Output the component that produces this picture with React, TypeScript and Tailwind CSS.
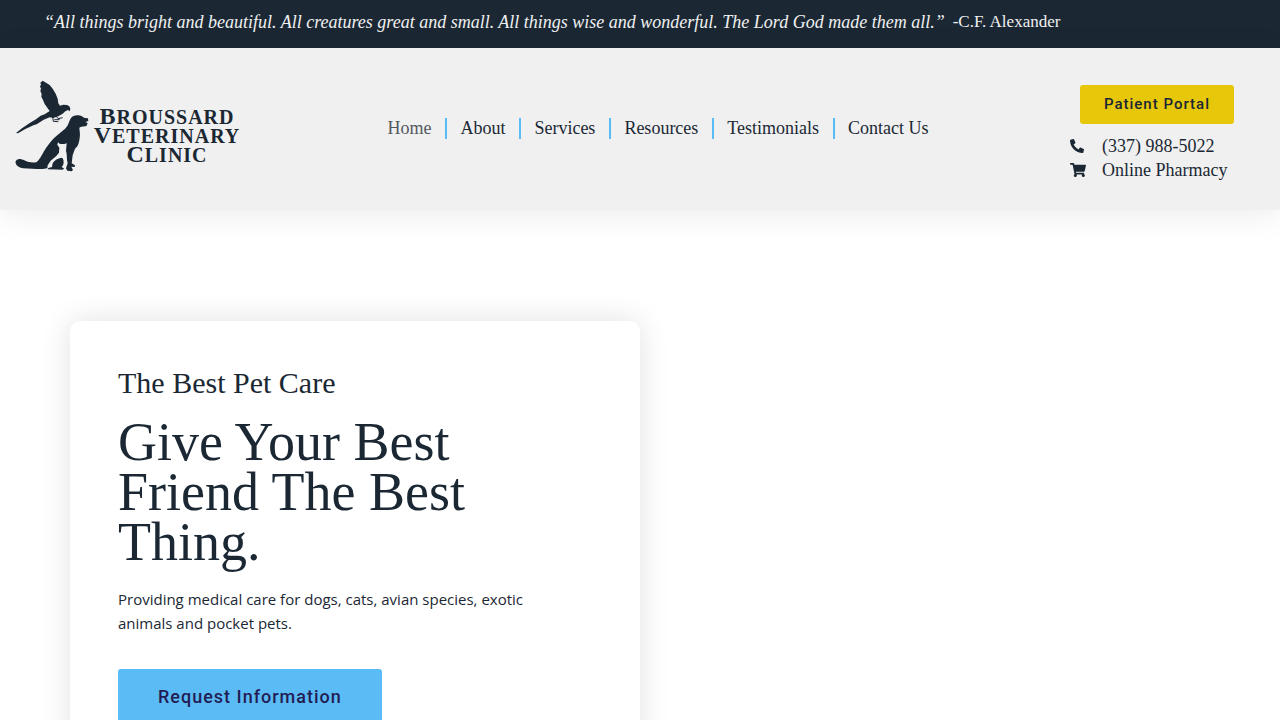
import { FaPhoneAlt, FaShoppingCart } from 'react-icons/fa';

const navItems = ['Home', 'About', 'Services', 'Resources', 'Testimonials', 'Contact Us'];

const contactLinks = [
  { label: '(337) 988-5022', href: 'tel:3379885022', icon: FaPhoneAlt, iconClass: 'size-3.5' },
  { label: 'Online Pharmacy', href: '#pharmacy', icon: FaShoppingCart, iconClass: 'size-4' },
];

const Logo = () => (
  <svg viewBox="0 0 228 92" className="w-[228px] h-[92px] fill-[#1b2834]" role="img" aria-label="Broussard Veterinary Clinic">
    <g transform="translate(-5 -4) scale(0.3333)">
      {/* parrot */}
      <path d="M98 14 L91 20 L93 26 L90 31 L93 38 L91 45 L95 54 L94 62 L99 72 L104 84 L113 97 L119 105 L104 115 L92 119 L78 130 L58 142 L36 157 L18 171 L24 172 L46 159 L72 147 L80 145 L101 131 L119 124 L130 126 L145 121 L158 113 L166 106 L174 102 L179 106 L181 98 L178 91 L171 87 L160 86 L150 89 L145 82 L143 68 L137 53 L128 38 L119 27 L108 20 Z" />
      <path d="M128 123 L130 136 L145 137 M139 121 L144 128 L158 125 M133 131 L149 131" className="fill-none stroke-[#1b2834]" strokeWidth="3" />
      {/* dog */}
      <path d="M180 131 C184 121 194 117 206 118 C216 119 219 125 225 126 L234 127 L235 135 L226 138 L233 141 L230 149 C222 153 213 149 208 156 C209 166 211 175 209 186 C207 202 204 211 195 218 L188 238 L185 262 L195 268 L194 273 L184 272 L189 282 L185 286 L172 284 L168 277 L173 262 C169 248 172 234 168 224 L170 202 L163 204 L150 204 L144 199 L142 206 L148 215 L147 230 L139 240 L122 254 L113 268 L112 277 C104 280 85 280 67 278 L40 277 C24 274 15 265 17 256 C22 246 33 248 43 253 C54 259 71 262 80 258 C92 248 98 231 108 216 C120 200 128 188 140 179 C159 163 170 157 175 143 Z" />
      {/* cat shadow */}
      <path d="M154 245 C144 247 133 252 128 262 L126 273 L115 276 L113 280 L157 281 L163 278 L155 273 C162 267 163 256 158 247 Z" />
    </g>
    <g fontFamily="Liberation Serif, serif" fontWeight="700" fontSize="20" textAnchor="middle" letterSpacing="1">
      <text x="152" y="44"><tspan fontSize="24">B</tspan>ROUSSARD</text>
      <text x="152" y="63"><tspan fontSize="24">V</tspan>ETERINARY</text>
      <text x="152" y="82"><tspan fontSize="24">C</tspan>LINIC</text>
    </g>
  </svg>
);

const TopBar = () => (
  <div className="bg-[#1b2834] text-[#f0f0f0] px-11 pt-2 pb-3 flex flex-wrap items-center gap-x-2">
    <p className="text-[18px] leading-7 italic">
      “All things bright and beautiful. All creatures great and small. All things wise and wonderful. The Lord God made them all.”
    </p>
    <p className="text-[17px] leading-7">-C.F. Alexander</p>
  </div>
);

const Header = () => (
  <header className="relative bg-[#f0f0f0] pl-[15px] pr-9 pt-8 pb-7 flex items-center justify-between shadow-[0_5px_30px_rgba(0,0,0,0.08)]">
    <a href="#home" className="pb-2.5">
      <Logo />
    </a>

    <nav className="pb-1.5 pl-1">
      <ul className="flex items-center divide-x-2 divide-[#5bbcf5]">
        {navItems.map((item, idx) => (
          <li key={item} className="pl-[13px] pr-[14px] leading-[21px] text-[18px]">
            <a href="#" className={idx === 0 ? 'text-[#54595f]' : ''}>
              {item}
            </a>
          </li>
        ))}
      </ul>
    </nav>

    <div className="w-[174px] pt-[5px]">
      <button className="block mx-auto rounded-[3px] bg-[#e7c709] px-6 py-3 font-[Roboto,sans-serif] text-[15px] leading-[15px] font-medium tracking-[1px]">
        Patient Portal
      </button>
      <ul className="mt-2.5">
        {contactLinks.map(({ label, href, icon: Icon, iconClass }) => (
          <li key={label}>
            <a href={href} className="flex items-center text-[18px] leading-6 whitespace-nowrap">
              <span className="w-8">
                <Icon className={iconClass} />
              </span>
              {label}
            </a>
          </li>
        ))}
      </ul>
    </div>
  </header>
);

const Hero = () => (
  <main className="max-w-[1140px] mx-auto pt-[111px] pb-16">
    <section className="w-1/2 rounded-[10px] bg-white p-12 shadow-[0_0_30px_rgba(0,0,0,0.12)]">
      <h2 className="text-[30px] leading-7">The Best Pet Care</h2>
      <h1 className="mt-5 max-w-96 text-[54px] leading-[50px]">Give Your Best Friend The Best Thing.</h1>
      <p className="mt-5 max-w-[440px] font-['Open_Sans',sans-serif] text-[15px] leading-6">
        Providing medical care for dogs, cats, avian species, exotic animals and pocket pets.
      </p>
      <button className="mt-[34px] rounded-[3px] bg-[#5bbcf5] px-10 py-5 font-[Roboto,sans-serif] text-[18px] leading-4 font-medium tracking-[1px] text-[#221c55]">
        Request Information
      </button>
    </section>
  </main>
);

const App = () => {
  return (
    <div className="bg-white text-[#1b2834] font-['Liberation_Serif',serif]">
      <TopBar />
      <Header />
      <Hero />
    </div>
  );
};

export default App;
